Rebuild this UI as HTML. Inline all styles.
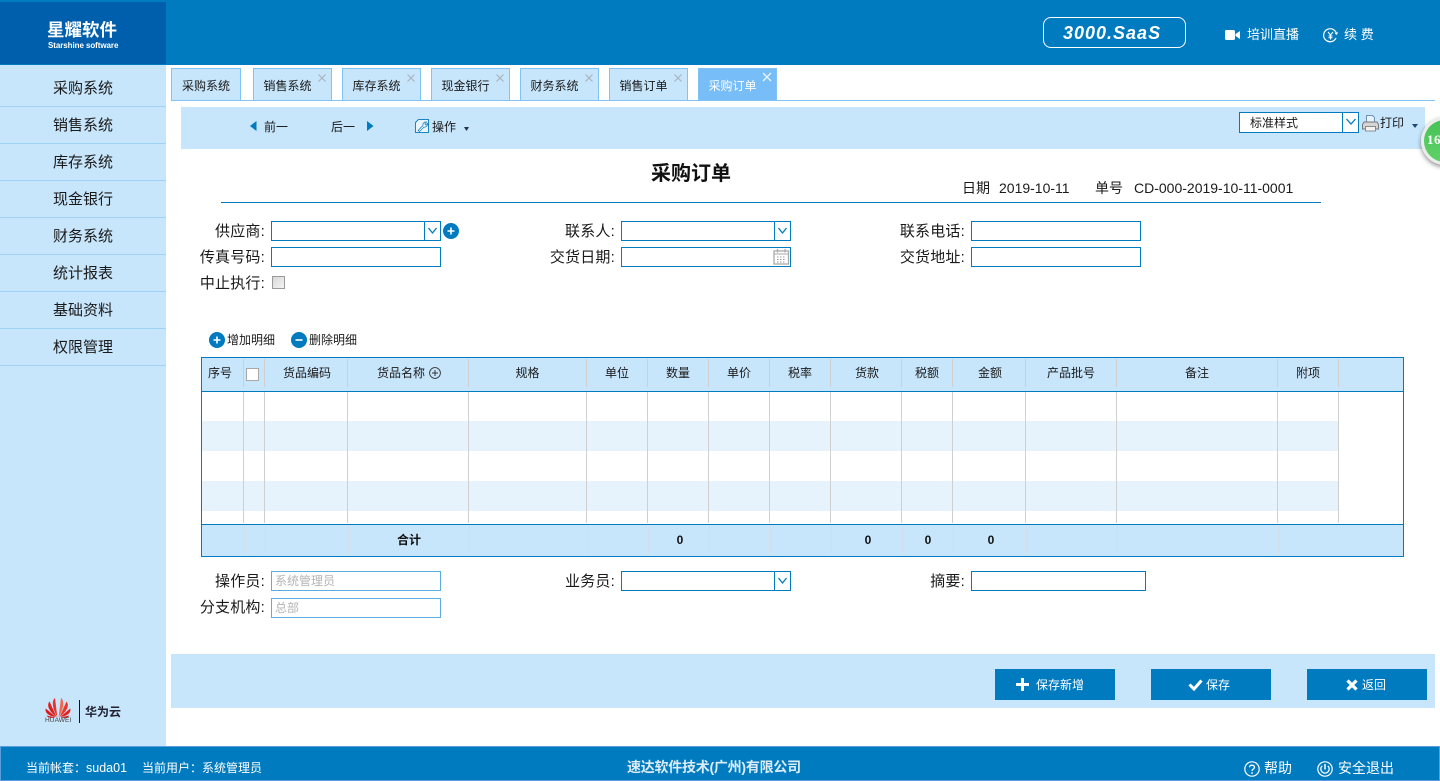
<!DOCTYPE html>
<html lang="zh-CN">
<head>
<meta charset="utf-8">
<title>采购订单</title>
<style>
html,body{margin:0;padding:0;width:1440px;height:781px;overflow:hidden;background:#fff}
body{position:relative;font-family:"Liberation Sans","Noto Sans CJK SC",sans-serif;font-size:12px;color:#111}
div,svg{position:absolute;box-sizing:border-box}
.t{white-space:nowrap;line-height:20px;height:20px}
.bar{background:#007bbf}
.nav{left:0;width:166px;height:37px;border-bottom:1px solid #9fd2f5;text-align:center;font-size:15px;line-height:37px;color:#1a1a1a}
.tab{top:68px;height:33px;width:79px;background:#c7e5fb;border:1px solid #82c3f5;text-align:center;line-height:34px;font-size:12px;color:#1a1a1a;padding-right:10px}
.x{top:73px;width:10px;height:10px}
.inp{background:#fff;border:1px solid #007bbf;height:20px;width:170px}
.lab{font-size:15px;letter-spacing:.2px;text-align:right;white-space:nowrap;line-height:20px;height:20px;color:#1a1a1a}
.v{width:1px;background:#cfcfcf}
.h{font-size:12px;text-align:center;top:363px;line-height:20px;height:20px;white-space:nowrap;color:#1a1a1a}
.f{font-size:12px;font-weight:bold;text-align:center;top:530px;line-height:20px;height:20px;color:#111}
.btn{top:669px;width:120px;height:31px;background:#007bbf;color:#fff;font-size:12px;line-height:33px}
.c{font-family:"Noto Sans CJK TC",sans-serif}
</style>
</head>
<body>
<!-- top bar -->
<div class="bar" style="left:0;top:0;width:1440px;height:65px"></div>
<div style="left:0;top:2px;width:166px;height:62px;background:#005fac"></div>
<div class="t" style="left:47px;top:20px;font-size:17.500px;font-weight:bold;color:#fff">星耀软件</div>
<div class="t" style="left:48px;top:36px;font-size:8px;font-weight:bold;color:#fff;letter-spacing:-.07px">Starshine software</div>
<div style="left:1043px;top:17px;width:143px;height:31px;border:1px solid #fff;border-radius:8px"></div>
<div class="t" style="left:1063px;top:23px;font-size:18px;font-weight:bold;font-style:italic;color:#fff;letter-spacing:1px">3000.SaaS</div>
<svg style="left:1225px;top:30px" width="15" height="11" viewBox="0 0 15 11"><rect x="0" y="0" width="10" height="10" rx="1.500" fill="#fff"/><path d="M10.500 4 15 1v8l-4.500-3z" fill="#fff"/></svg>
<div class="t" style="left:1247px;top:25px;font-size:13px;color:#fff">培训直播</div>
<svg style="left:1323px;top:28px" width="15" height="15" viewBox="0 0 15 15"><path d="M13 10A6.500 6.500 0 1 1 13.500 6" fill="none" stroke="#fff" stroke-width="1.200"/><path d="M11.500 5.500 14 7l1-3z" fill="#fff"/><path d="M5 4l2.500 3L10 4M7.500 7v4.500M5.500 8h4M5.500 9.700h4" fill="none" stroke="#fff"/></svg>
<div class="t" style="left:1344px;top:25px;font-size:13px;color:#fff;letter-spacing:-.4px;word-spacing:1px">续 费</div>

<!-- sidebar -->
<div style="left:0;top:65px;width:166px;height:681px;background:#c7e5fb"></div>
<div class="nav" style="top:70px">采购系统</div>
<div class="nav" style="top:107px">销售系统</div>
<div class="nav" style="top:144px">库存系统</div>
<div class="nav" style="top:181px">现金银行</div>
<div class="nav" style="top:218px">财务系统</div>
<div class="nav" style="top:255px">统计报表</div>
<div class="nav" style="top:292px">基础资料</div>
<div class="nav" style="top:329px">权限管理</div>

<!-- huawei -->
<svg style="left:45px;top:698px" width="26" height="20" viewBox="0 0 26 20">
<path d="M12.300 19 10 0C7 2 6.500 9 12.300 19z" fill="#e8342a"/>
<path d="M13.700 19 16 0C19 2 19.500 9 13.700 19z" fill="#f0654f"/>
<path d="M11.500 19 4.500 3.500C1.500 7 3.500 13 11.500 19z" fill="#df1f1c"/>
<path d="M14.500 19 21.500 3.500C24.500 7 22.500 13 14.500 19z" fill="#e8392c"/>
<path d="M10.800 19 .8 10.500C-.5 14 3 18 10.800 19z" fill="#db1a1a"/>
<path d="M15.200 19 25.200 10.500C26.500 14 23 18 15.200 19z" fill="#df2420"/>
<path d="M10.500 19.500 1.500 17.500C3 20 7 20.300 10.500 19.500z" fill="#d81818"/>
<path d="M15.500 19.500 24.500 17.500C23 20 19 20.300 15.500 19.500z" fill="#d81818"/>
</svg>
<div class="t" style="left:45px;top:711px;font-size:6.500px;color:#444;letter-spacing:.1px">HUAWEI</div>
<div style="left:79px;top:700px;width:1px;height:23px;background:#111"></div>
<div class="t" style="left:85px;top:702px;font-size:12px;font-weight:bold;color:#223">华为云</div>

<!-- tabs -->
<div class="tab" style="left:171px;width:70px;padding-right:0">采购系统</div>
<div class="tab" style="left:253px">销售系统</div>
<div class="tab" style="left:342px">库存系统</div>
<div class="tab" style="left:431px">现金银行</div>
<div class="tab" style="left:520px">财务系统</div>
<div class="tab" style="left:609px">销售订单</div>
<div class="tab" style="left:698px;background:#77bdf7;color:#fff">采购订单</div>
<svg class="x" style="left:317px" viewBox="0 0 10 10"><path d="M1.500 1.500l7 7M8.500 1.500l-7 7" stroke="#a9b4bd" stroke-width="1.200"/></svg>
<svg class="x" style="left:406px" viewBox="0 0 10 10"><path d="M1.500 1.500l7 7M8.500 1.500l-7 7" stroke="#a9b4bd" stroke-width="1.200"/></svg>
<svg class="x" style="left:495px" viewBox="0 0 10 10"><path d="M1.500 1.500l7 7M8.500 1.500l-7 7" stroke="#a9b4bd" stroke-width="1.200"/></svg>
<svg class="x" style="left:584px" viewBox="0 0 10 10"><path d="M1.500 1.500l7 7M8.500 1.500l-7 7" stroke="#a9b4bd" stroke-width="1.200"/></svg>
<svg class="x" style="left:673px" viewBox="0 0 10 10"><path d="M1.500 1.500l7 7M8.500 1.500l-7 7" stroke="#a9b4bd" stroke-width="1.200"/></svg>
<svg class="x" style="left:762px;top:72px" viewBox="0 0 10 10"><path d="M1 1l8 8M9 1l-8 8" stroke="#e8f3fc" stroke-width="1.400"/></svg>
<div style="left:171px;top:100px;width:1264px;height:1px;background:#82c3f5"></div>

<!-- toolbar -->
<div style="left:181px;top:107px;width:1244px;height:42px;background:#c7e5fb"></div>
<svg style="left:250px;top:121px" width="7" height="10" viewBox="0 0 7 10"><path d="M6.500 0v10L0 5z" fill="#007bbf"/></svg>
<div class="t" style="left:264px;top:117px;font-size:12px;color:#1a1a1a">前一</div>
<div class="t" style="left:331px;top:117px;font-size:12px;color:#1a1a1a">后一</div>
<svg style="left:367px;top:121px" width="7" height="10" viewBox="0 0 7 10"><path d="M0 0v10l6.500-5z" fill="#007bbf"/></svg>
<svg style="left:415px;top:119px" width="14" height="14" viewBox="0 0 14 14"><path d="M3.500.5h10v13H.5V3.500z" fill="#eaf5fd" stroke="#1a85c4"/><path d="M3 11.500 8 6.500C7.500 4.500 9.500 2.500 11.500 3L9.800 4.800l1 1.200 1.700-1.700C13 6.500 11 8.500 9 8L4.500 12.500z" fill="#fff" stroke="#1a85c4" stroke-width=".8"/></svg>
<div class="t" style="left:432px;top:117px;font-size:12px;color:#1a1a1a">操作</div>
<svg style="left:464px;top:127px" width="5" height="4" viewBox="0 0 5 4"><path d="M0 0h5L2.500 4z" fill="#234"/></svg>
<div class="inp" style="left:1239px;top:112px;width:120px;height:21px"></div>
<div class="v" style="left:1342px;top:112px;height:21px;background:#007bbf"></div>
<svg style="left:1345px;top:118px" width="12" height="8" viewBox="0 0 12 8"><path d="M1.500 1 6 6l4.500-5" fill="none" stroke="#007bbf" stroke-width="1.300"/></svg>
<div class="t" style="left:1250px;top:113px;font-size:12px;color:#1a1a1a">标准样式</div>
<svg style="left:1362px;top:115px" width="17" height="17" viewBox="0 0 17 17"><path d="M4.500 7V.5h6l2 2V7" fill="#e8f2fb" stroke="#6e93bd"/><path d="M.5 9.500 2 7h13l1.500 2.500V14h-16z" fill="#d5d5d5" stroke="#777"/><rect x="3.500" y="11.500" width="10" height="4.500" fill="#f2f2f2" stroke="#777" stroke-width=".8"/></svg>
<div class="t" style="left:1380px;top:113px;font-size:12px;color:#1a1a1a">打印</div>
<svg style="left:1412px;top:124px" width="6" height="4" viewBox="0 0 6 4"><path d="M0 0h6L3 4z" fill="#1e4a78"/></svg>
<!-- badge -->
<div style="left:1421px;top:117px;width:48px;height:48px;border-radius:50%;background:linear-gradient(#45c256,#5fd268);border:3px solid #e9eeea;box-shadow:0 2px 5px rgba(0,0,0,.45)"></div>
<div class="t" style="left:1427px;top:130px;font-size:13px;font-weight:bold;color:#fff;font-family:'Liberation Serif',serif;letter-spacing:.5px">16</div>

<!-- title -->
<div class="t" style="left:651px;top:164px;font-size:20px;font-weight:bold;color:#111">采购订单</div>
<div class="t" style="left:962px;top:178px;font-size:14px;color:#1a1a1a">日期</div>
<div class="t" style="left:999px;top:178px;font-size:14px;color:#1a1a1a">2019-10-11</div>
<div class="t" style="left:1095px;top:178px;font-size:14px;color:#1a1a1a">单号</div>
<div class="t" style="left:1134px;top:178px;font-size:14px;color:#1a1a1a">CD-000-2019-10-11-0001</div>
<div style="left:221px;top:202px;width:1100px;height:1px;background:#007bbf"></div>

<!-- form -->
<div class="lab" style="left:180px;top:222px;width:85px">供应商:</div>
<div class="lab" style="left:180px;top:248px;width:85px">传真号码:</div>
<div class="lab" style="left:180px;top:274px;width:85px">中止执行:</div>
<div class="lab" style="left:530px;top:222px;width:85px">联系人:</div>
<div class="lab" style="left:530px;top:248px;width:85px">交货日期:</div>
<div class="lab" style="left:880px;top:222px;width:85px">联系电话:</div>
<div class="lab" style="left:880px;top:248px;width:85px">交货地址:</div>
<div class="inp" style="left:271px;top:221px"></div>
<div class="v" style="left:424px;top:221px;height:20px;background:#007bbf"></div>
<svg style="left:427px;top:227px" width="11" height="8" viewBox="0 0 11 8"><path d="M1.500 1 5.500 6l4-5" fill="none" stroke="#007bbf" stroke-width="1.300"/></svg>
<svg style="left:443px;top:223px" width="16" height="16" viewBox="0 0 16 16"><circle cx="8" cy="8" r="8" fill="#007bbf"/><path d="M8 4.500v7M4.500 8h7" stroke="#fff" stroke-width="1.600"/></svg>
<div class="inp" style="left:271px;top:247px"></div>
<div style="left:272px;top:276px;width:13px;height:13px;background:linear-gradient(135deg,#d8d8d8,#f4f4f4);border:1px solid #9a9a9a"></div>
<div class="inp" style="left:621px;top:221px"></div>
<div class="v" style="left:774px;top:221px;height:20px;background:#007bbf"></div>
<svg style="left:777px;top:227px" width="11" height="8" viewBox="0 0 11 8"><path d="M1.500 1 5.500 6l4-5" fill="none" stroke="#007bbf" stroke-width="1.300"/></svg>
<div class="inp" style="left:621px;top:247px"></div>
<svg style="left:773px;top:249px" width="17" height="16" viewBox="0 0 17 16"><rect x="1" y="2" width="14.500" height="13" fill="#fff" stroke="#aaa" stroke-width="1.300"/><path d="M1 5h14.500" stroke="#aaa"/><path d="M4.500 0v3.500M12 0v3.500" stroke="#aaa" stroke-width="1.300"/><path d="M4 8h9M4 10.500h9M4 13h9" stroke="#999" stroke-dasharray="1.500 1.500"/></svg>
<div class="inp" style="left:971px;top:221px"></div>
<div class="inp" style="left:971px;top:247px"></div>

<!-- detail actions -->
<svg style="left:209px;top:332px" width="16" height="16" viewBox="0 0 16 16"><circle cx="8" cy="8" r="8" fill="#007bbf"/><path d="M8 4.500v7M4.500 8h7" stroke="#fff" stroke-width="1.600"/></svg>
<div class="t" style="left:227px;top:330px;font-size:12px;color:#1a1a1a">增加明细</div>
<svg style="left:291px;top:332px" width="16" height="16" viewBox="0 0 16 16"><circle cx="8" cy="8" r="8" fill="#007bbf"/><path d="M4.500 8h7" stroke="#fff" stroke-width="1.600"/></svg>
<div class="t" style="left:309px;top:330px;font-size:12px;color:#1a1a1a">删除明细</div>

<!-- table -->
<div style="left:201px;top:357px;width:1203px;height:200px;background:#fff;border:1px solid #007bbf"></div>
<div style="left:202px;top:358px;width:1201px;height:33px;background:#c7e5fb"></div>
<div style="left:202px;top:391px;width:1201px;height:1px;background:#007bbf"></div>
<div style="left:202px;top:421px;width:1137px;height:30px;background:#e6f3fd"></div>
<div style="left:202px;top:481px;width:1137px;height:30px;background:#e6f3fd"></div>
<div style="left:202px;top:524px;width:1201px;height:1px;background:#007bbf"></div>
<div style="left:202px;top:525px;width:1201px;height:31px;background:#c7e5fb"></div>

<!-- column lines header -->
<div class="v" style="left:243px;top:359px;height:28px"></div><div class="v" style="left:264px;top:359px;height:28px"></div><div class="v" style="left:347px;top:359px;height:28px"></div><div class="v" style="left:468px;top:359px;height:28px"></div><div class="v" style="left:586px;top:359px;height:28px"></div><div class="v" style="left:647px;top:359px;height:28px"></div><div class="v" style="left:708px;top:359px;height:28px"></div><div class="v" style="left:769px;top:359px;height:28px"></div><div class="v" style="left:830px;top:359px;height:28px"></div><div class="v" style="left:901px;top:359px;height:28px"></div><div class="v" style="left:952px;top:359px;height:28px"></div><div class="v" style="left:1025px;top:359px;height:28px"></div><div class="v" style="left:1116px;top:359px;height:28px"></div><div class="v" style="left:1277px;top:359px;height:28px"></div><div class="v" style="left:1338px;top:359px;height:28px"></div>
<!-- column lines body -->
<div class="v" style="left:243px;top:392px;height:131px"></div><div class="v" style="left:264px;top:392px;height:131px"></div><div class="v" style="left:347px;top:392px;height:131px"></div><div class="v" style="left:468px;top:392px;height:131px"></div><div class="v" style="left:586px;top:392px;height:131px"></div><div class="v" style="left:647px;top:392px;height:131px"></div><div class="v" style="left:708px;top:392px;height:131px"></div><div class="v" style="left:769px;top:392px;height:131px"></div><div class="v" style="left:830px;top:392px;height:131px"></div><div class="v" style="left:901px;top:392px;height:131px"></div><div class="v" style="left:952px;top:392px;height:131px"></div><div class="v" style="left:1025px;top:392px;height:131px"></div><div class="v" style="left:1116px;top:392px;height:131px"></div><div class="v" style="left:1277px;top:392px;height:131px"></div><div class="v" style="left:1338px;top:392px;height:131px"></div>
<!-- column lines footer -->
<div class="v" style="left:244px;top:526px;height:29px;background:#d3dfe8"></div><div class="v" style="left:265px;top:526px;height:29px;background:#d3dfe8"></div><div class="v" style="left:348px;top:526px;height:29px;background:#d3dfe8"></div><div class="v" style="left:469px;top:526px;height:29px;background:#d3dfe8"></div><div class="v" style="left:587px;top:526px;height:29px;background:#d3dfe8"></div><div class="v" style="left:648px;top:526px;height:29px;background:#d3dfe8"></div><div class="v" style="left:709px;top:526px;height:29px;background:#d3dfe8"></div><div class="v" style="left:770px;top:526px;height:29px;background:#d3dfe8"></div><div class="v" style="left:831px;top:526px;height:29px;background:#d3dfe8"></div><div class="v" style="left:902px;top:526px;height:29px;background:#d3dfe8"></div><div class="v" style="left:953px;top:526px;height:29px;background:#d3dfe8"></div><div class="v" style="left:1026px;top:526px;height:29px;background:#d3dfe8"></div><div class="v" style="left:1117px;top:526px;height:29px;background:#d3dfe8"></div><div class="v" style="left:1278px;top:526px;height:29px;background:#d3dfe8"></div>

<!-- header text -->
<div class="h" style="left:202px;width:36px">序号</div>
<div style="left:246px;top:368px;width:13px;height:13px;background:#fff;border:1px solid #a8a8a8"></div>
<div class="h" style="left:266px;width:82px">货品编码</div>
<div class="h" style="left:376px;width:50px">货品名称</div>
<svg style="left:429px;top:367px" width="12" height="12" viewBox="0 0 12 12"><circle cx="6" cy="6" r="5.400" fill="none" stroke="#333" stroke-width=".9"/><path d="M6 3v6M3 6h6" stroke="#333"/></svg>
<div class="h" style="left:468px;width:119px">规格</div>
<div class="h" style="left:587px;width:60px">单位</div>
<div class="h" style="left:648px;width:60px">数量</div>
<div class="h" style="left:709px;width:60px">单价</div>
<div class="h" style="left:770px;width:60px">税率</div>
<div class="h" style="left:831px;width:72px">货款</div>
<div class="h" style="left:902px;width:50px">税额</div>
<div class="h" style="left:953px;width:74px">金额</div>
<div class="h" style="left:1026px;width:90px">产品批号</div>
<div class="h" style="left:1117px;width:160px">备注</div>
<div class="h" style="left:1278px;width:60px">附项</div>

<!-- footer text -->
<div class="f" style="left:349px;width:120px">合计</div>
<div class="f" style="left:650px;width:60px">0</div>
<div class="f" style="left:832px;width:72px">0</div>
<div class="f" style="left:903px;width:50px">0</div>
<div class="f" style="left:954px;width:74px">0</div>

<!-- lower form -->
<div class="lab" style="left:180px;top:572px;width:85px">操作员:</div>
<div class="lab" style="left:180px;top:598px;width:85px">分支机构:</div>
<div class="lab" style="left:530px;top:572px;width:85px">业务员:</div>
<div class="lab" style="left:880px;top:572px;width:85px">摘要:</div>
<div class="inp t" style="left:271px;top:571px;border-color:#5caede;color:#b4b4b4;font-size:12px;padding-left:3px;line-height:19px">系统管理员</div>
<div class="inp t" style="left:271px;top:598px;border-color:#5caede;color:#b4b4b4;font-size:12px;padding-left:3px;line-height:19px">总部</div>
<div class="inp" style="left:621px;top:571px"></div>
<div class="v" style="left:774px;top:571px;height:20px;background:#007bbf"></div>
<svg style="left:777px;top:577px" width="11" height="8" viewBox="0 0 11 8"><path d="M1.500 1 5.500 6l4-5" fill="none" stroke="#007bbf" stroke-width="1.300"/></svg>
<div class="inp" style="left:971px;top:571px;width:175px"></div>

<!-- bottom action bar -->
<div style="left:171px;top:654px;width:1264px;height:54px;background:#c7e5fb"></div>
<div class="btn" style="left:995px"></div>
<div class="btn" style="left:1151px"></div>
<div class="btn" style="left:1307px"></div>
<svg style="left:1016px;top:678px" width="13" height="13" viewBox="0 0 13 13"><path d="M6.500 0v13M0 6.500h13" stroke="#fff" stroke-width="3"/></svg>
<div class="t" style="left:1036px;top:675px;font-size:12px;color:#fff">保存新增</div>
<svg style="left:1188px;top:679px" width="15" height="12" viewBox="0 0 15 12"><path d="M1.500 5.500 6 10 13.500 1.500" fill="none" stroke="#fff" stroke-width="3"/></svg>
<div class="t" style="left:1206px;top:675px;font-size:12px;color:#fff">保存</div>
<svg style="left:1346px;top:679px" width="12" height="12" viewBox="0 0 12 12"><path d="M1.500 1.500l9 9M10.500 1.500l-9 9" stroke="#fff" stroke-width="3.200"/></svg>
<div class="t" style="left:1362px;top:675px;font-size:12px;color:#fff">返回</div>

<!-- footer -->
<div class="bar" style="left:0;top:746px;width:1440px;height:35px;border:1px solid #5a9fdc"></div>
<div class="t" style="left:26px;top:758px;font-size:12px;color:#fff">当前帐套<span class="c">：</span><span style="font-size:12.500px">suda01</span></div>
<div class="t" style="left:142px;top:758px;font-size:12px;color:#fff">当前用户<span class="c">：</span>系统管理员</div>
<div class="t" style="left:627px;top:757px;font-size:14px;font-weight:bold;color:#dcecf6;letter-spacing:-.25px">速达软件技术(广州)有限公司</div>
<svg style="left:1244px;top:761px" width="16" height="16" viewBox="0 0 16 16"><circle cx="8" cy="8" r="7.200" fill="none" stroke="#fff" stroke-width="1.200"/><path d="M5.500 6.200C5.500 3.500 10.500 3.500 10.500 6.200 10.500 8 8 8 8 10" fill="none" stroke="#fff" stroke-width="1.300"/><circle cx="8" cy="12" r=".9" fill="#fff"/></svg>
<div class="t" style="left:1264px;top:758px;font-size:14px;color:#fff">帮助</div>
<svg style="left:1317px;top:761px" width="16" height="16" viewBox="0 0 16 16"><circle cx="8" cy="8" r="7.200" fill="none" stroke="#fff" stroke-width="1.200"/><path d="M5.200 4.800A4.200 4.200 0 1 0 10.800 4.800" fill="none" stroke="#fff" stroke-width="1.300"/><path d="M8 3v5.500" stroke="#fff" stroke-width="1.500"/></svg>
<div class="t" style="left:1338px;top:758px;font-size:14px;color:#fff">安全退出</div>
</body>
</html>
